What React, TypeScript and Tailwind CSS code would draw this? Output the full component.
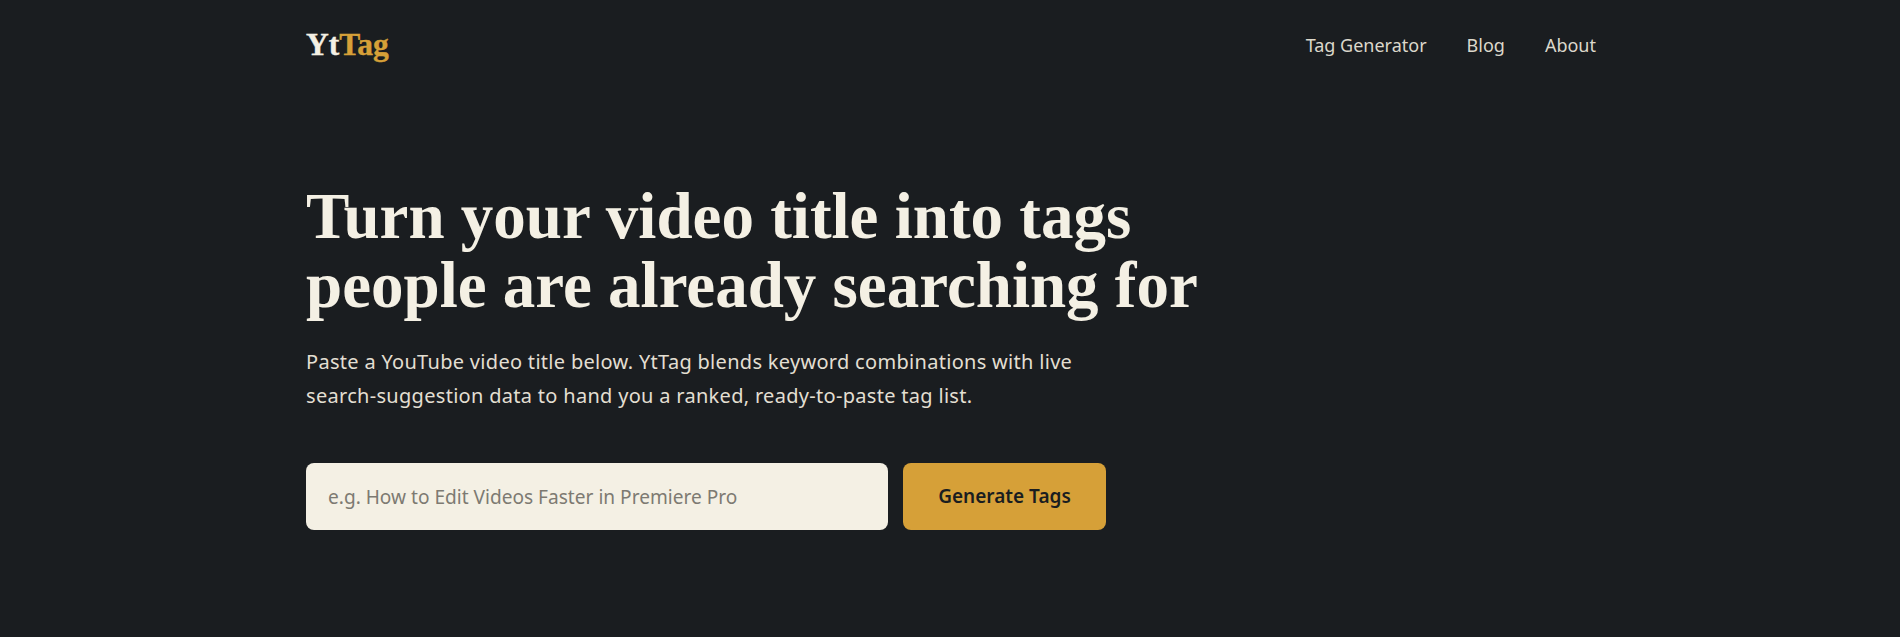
import React from 'react';

const serif = "font-['Liberation_Serif',serif]";

export default function App() {
  return (
    <div className="min-h-[637px] bg-[#1a1d20] font-['Noto_Sans',sans-serif] text-[#f4f0e4]">
      <div className="ml-[306px] w-[1290px]">
        <header className="flex h-[92px] items-center justify-between">
          <a className={`${serif} -mt-[2px] text-[31.5px] font-bold [-webkit-text-stroke:0.4px]`}>
            <span className="text-[#f4f0e4]">Yt</span>
            <span className="text-[#d6a038]">Tag</span>
          </a>
          <nav className="-mt-[2px] flex gap-10 text-[18px] text-[#dcd8cb]">
            <a>Tag Generator</a>
            <a>Blog</a>
            <a>About</a>
          </nav>
        </header>

        <section className="pt-[90px]">
          <h1 className={`${serif} text-[65px] leading-[69px] font-bold text-[#f4f0e4]`}>
            Turn your video title into tags
            <br />
            people are already searching for
          </h1>
          <p className="mt-[25px] w-[800px] text-[20px] leading-[34px] tracking-[0.3px] text-[#e3dfd2]">
            Paste a YouTube video title below. YtTag blends keyword combinations with live search-suggestion data to hand
            you a ranked, ready-to-paste tag list.
          </p>
          <form className="mt-[50px] flex gap-[15px]">
            <input
              className="h-[67px] w-[582px] rounded-lg bg-[#f4f0e4] px-[22px] text-[19.1px] text-[#1a1d20] outline-none placeholder:text-[#7d7a72]"
              placeholder="e.g. How to Edit Videos Faster in Premiere Pro"
            />
            <button type="button" className="h-[67px] w-[203px] rounded-lg bg-[#d6a038] text-[19px] font-semibold text-[#1a1d20]">
              Generate Tags
            </button>
          </form>
        </section>
      </div>
    </div>
  );
}
